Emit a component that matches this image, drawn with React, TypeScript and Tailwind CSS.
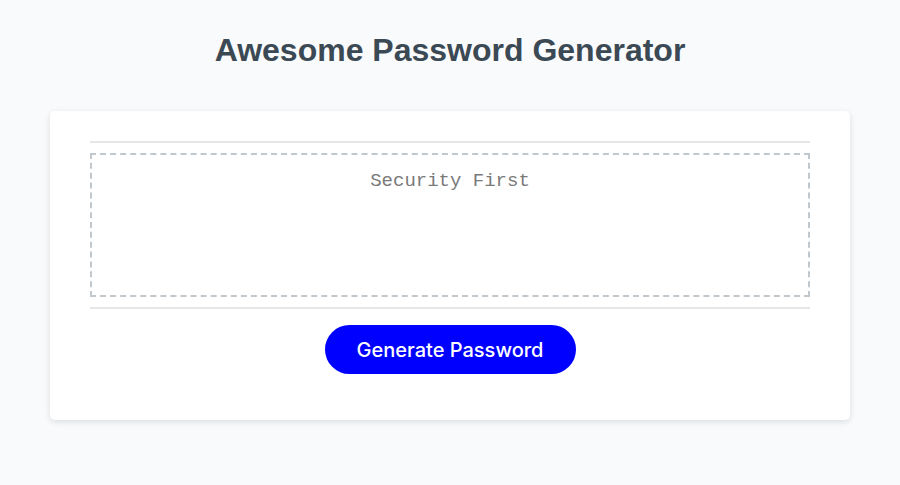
export default function App() {
  return (
    <div className="min-h-[485px] w-full bg-[#f9fafb] font-['Liberation_Sans',Arial,sans-serif]">
      <div className="pt-[30px] pb-[41px] text-center">
        <h1 className="text-[32px] font-bold leading-[40px] text-[hsl(206,17%,28%)]">Awesome Password Generator</h1>
      </div>
      <div className="mx-[50px] rounded-[5px] bg-white px-[40px] pt-[30px] pb-[46px] shadow-[0_2px_6px_rgba(0,0,0,0.12)]">
        <div className="h-[2px] bg-[#e6e6e6]" />
        <div className="my-[10px] flex h-[144px] justify-center border-2 border-dashed border-[#c0c7cd] pt-[14px]">
          <span className="font-['Liberation_Mono','Courier_New',monospace] text-[19px] leading-[24px] text-[#7a7a7a]">Security First</span>
        </div>
        <div className="h-[2px] bg-[#e6e6e6]" />
        <div className="mt-[16px] flex justify-center">
          <button className="h-[49px] w-[251px] rounded-full bg-[#0000ff] text-[20px] font-medium text-white font-['Inter',sans-serif]">Generate Password</button>
        </div>
      </div>
    </div>
  );
}
